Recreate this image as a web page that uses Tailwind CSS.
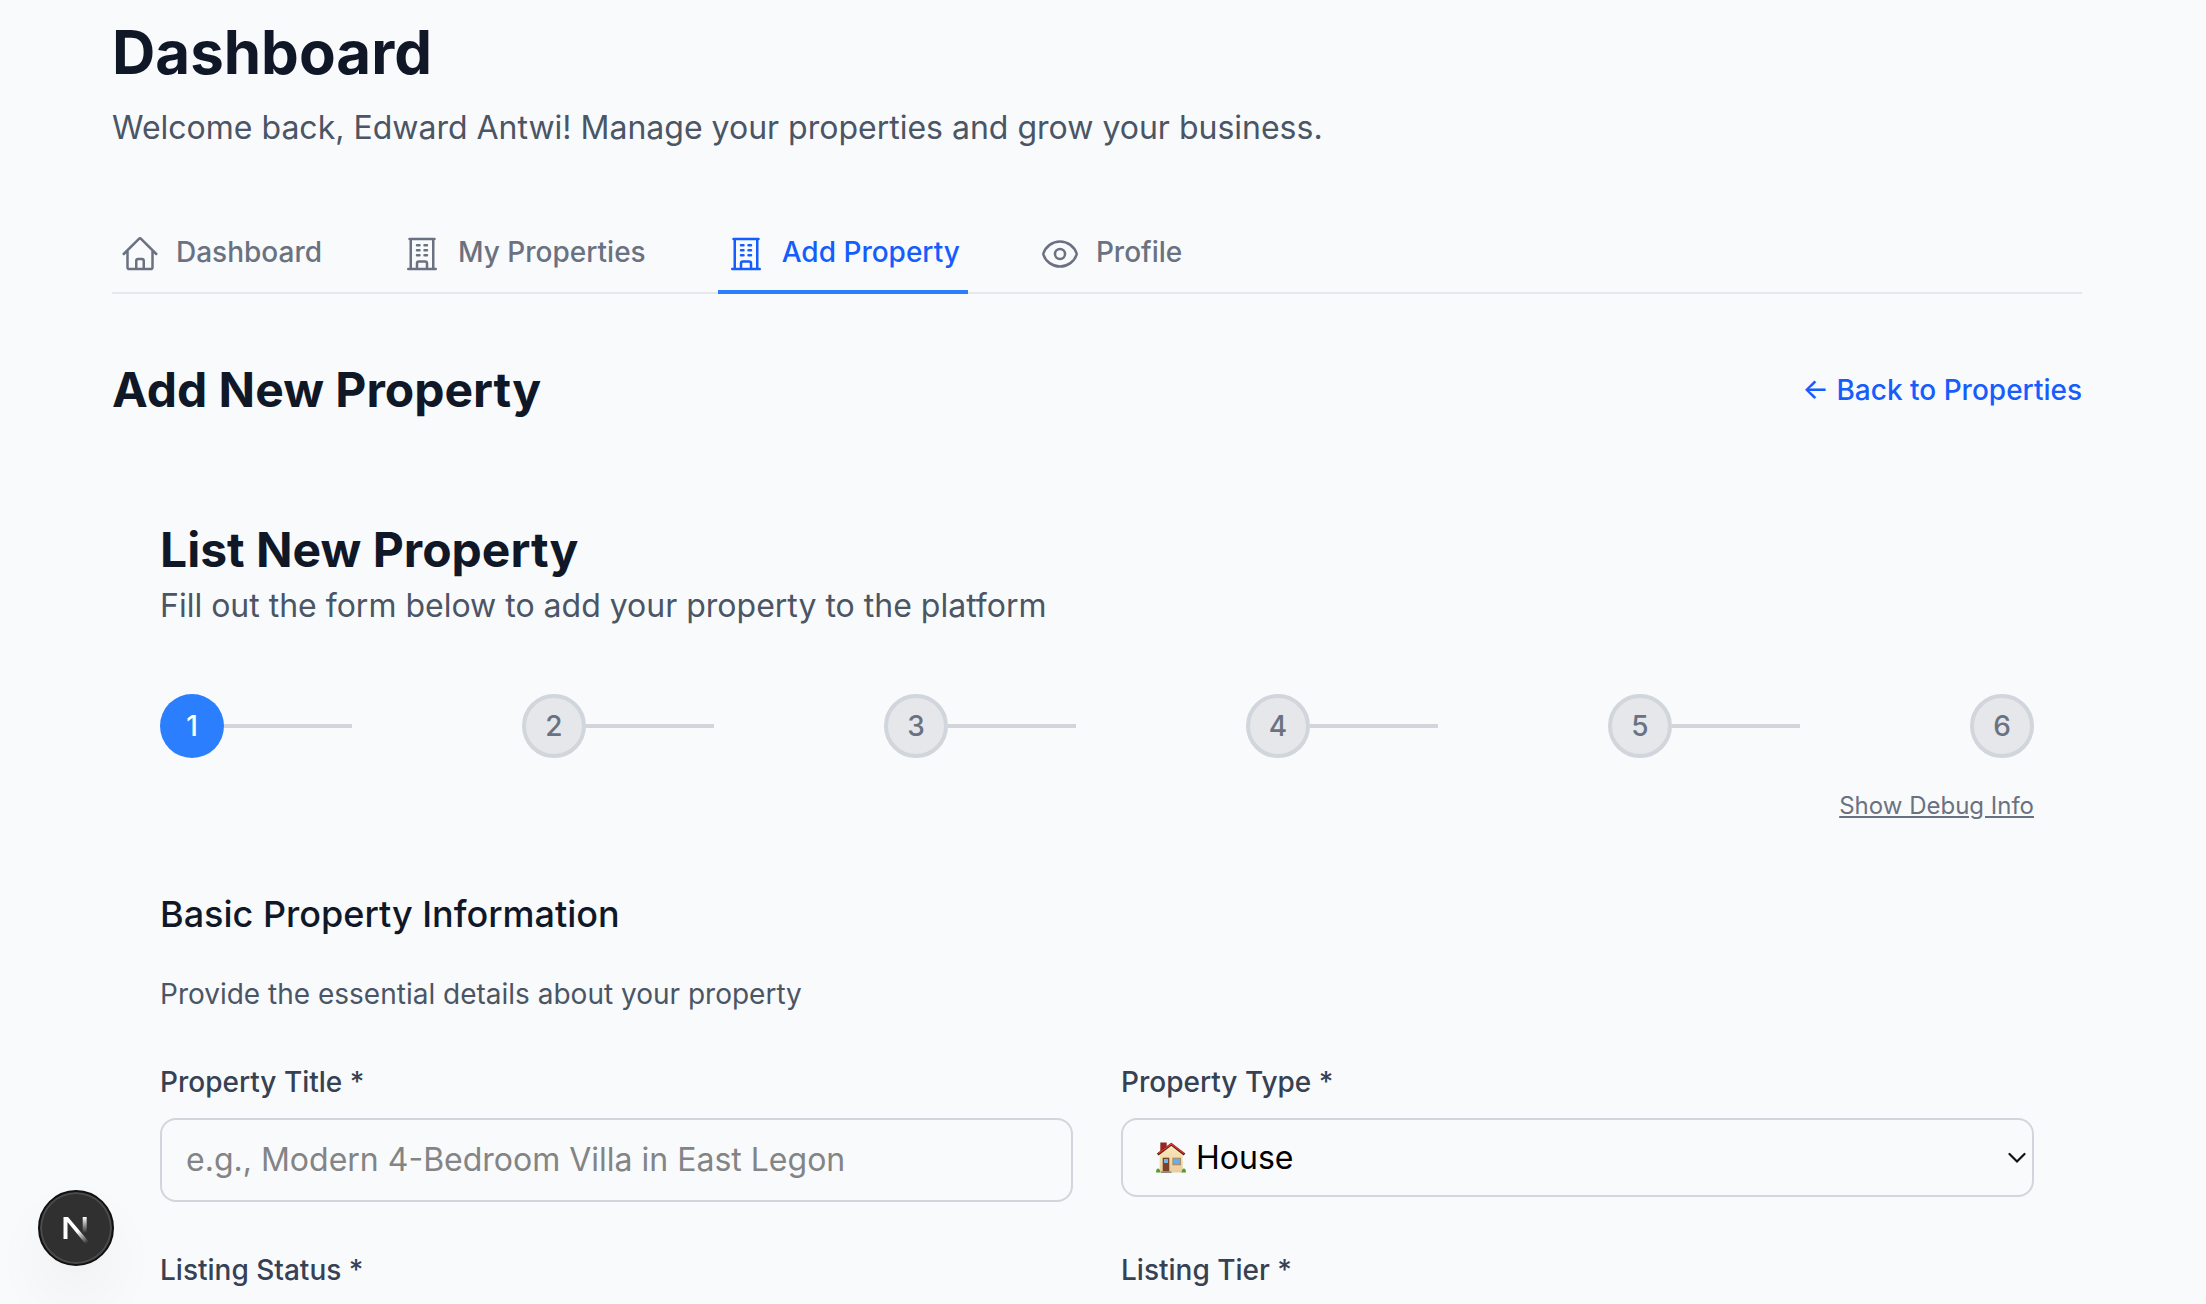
<!DOCTYPE html>
<html lang="en">
<head>
<meta charset="utf-8">
<title>Dashboard</title>
<script src="https://cdn.jsdelivr.net/npm/@tailwindcss/browser@4"></script>
</head>
<body class="h-[1304px] overflow-hidden bg-gray-50 font-['Inter',sans-serif] text-gray-900 antialiased">
<main class="flex flex-col pr-[124px] pl-[112px] pt-4">
  <h1 class="text-[60px] leading-[72px] font-bold">Dashboard</h1>
  <p class="mt-4 text-[32px] leading-[48px] text-gray-600">Welcome back, Edward Antwi! Manage your properties and grow your business.</p>

  <nav class="mt-[66px] flex h-[76px] gap-16 border-b-2 border-gray-200 text-[28px] leading-10 font-medium text-gray-500">
    <a class="flex h-[76px] gap-4 border-b-4 border-transparent px-2 pt-4">
      <svg class="size-10" viewBox="0 0 24 24" fill="none" stroke="currentColor" stroke-width="1.5" stroke-linecap="round" stroke-linejoin="round"><path d="m2.25 12 8.954-8.955c.44-.439 1.152-.439 1.591 0L21.75 12M4.5 9.75v10.125c0 .621.504 1.125 1.125 1.125H9.75v-4.875c0-.621.504-1.125 1.125-1.125h2.25c.621 0 1.125.504 1.125 1.125V21h4.125c.621 0 1.125-.504 1.125-1.125V9.75M8.25 21h8.25"/></svg>
      <span class="-mt-0.5">Dashboard</span>
    </a>
    <a class="flex h-[76px] gap-4 border-b-4 border-transparent px-2 pt-4">
      <svg class="size-10" viewBox="0 0 24 24" fill="none" stroke="currentColor" stroke-width="1.5" stroke-linecap="round" stroke-linejoin="round"><path d="M3.75 21h16.5M4.5 3h15M5.25 3v18m13.5-18v18M9 6.75h1.5m-1.5 3h1.5m-1.5 3h1.5m3-6H15m-1.5 3H15m-1.5 3H15M9 21v-3.375c0-.621.504-1.125 1.125-1.125h3.75c.621 0 1.125.504 1.125 1.125V21"/></svg>
      <span class="-mt-0.5">My Properties</span>
    </a>
    <a class="flex h-[76px] gap-4 border-b-4 border-blue-500 px-2 pt-4 text-blue-600">
      <svg class="size-10" viewBox="0 0 24 24" fill="none" stroke="currentColor" stroke-width="1.5" stroke-linecap="round" stroke-linejoin="round"><path d="M3.75 21h16.5M4.5 3h15M5.25 3v18m13.5-18v18M9 6.75h1.5m-1.5 3h1.5m-1.5 3h1.5m3-6H15m-1.5 3H15m-1.5 3H15M9 21v-3.375c0-.621.504-1.125 1.125-1.125h3.75c.621 0 1.125.504 1.125 1.125V21"/></svg>
      <span class="-mt-0.5">Add Property</span>
    </a>
    <a class="flex h-[76px] gap-4 border-b-4 border-transparent px-2 pt-4">
      <svg class="size-10" viewBox="0 0 24 24" fill="none" stroke="currentColor" stroke-width="1.5" stroke-linecap="round" stroke-linejoin="round"><path d="M2.036 12.322a1.012 1.012 0 0 1 0-.639C3.423 7.51 7.36 4.5 12 4.5c4.638 0 8.573 3.007 9.963 7.178.07.207.07.431 0 .639C20.577 16.49 16.64 19.5 12 19.5c-4.638 0-8.573-3.007-9.963-7.178Z"/><path d="M15 12a3 3 0 1 1-6 0 3 3 0 0 1 6 0Z"/></svg>
      <span class="-mt-0.5">Profile</span>
    </a>
  </nav>

  <div class="mt-16 flex h-16 items-center justify-between">
    <h2 class="text-[48px] leading-[64px] font-bold">Add New Property</h2>
    <a class="text-[28px] leading-10 font-medium text-blue-600">← Back to Properties</a>
  </div>

  <section class="mt-24 flex flex-col px-12">
    <h2 class="text-[48px] leading-[64px] font-bold">List New Property</h2>
    <p class="text-[32px] leading-[48px] text-gray-600">Fill out the form below to add your property to the platform</p>

    <ol class="mt-16 flex justify-between text-[28px] leading-10 font-medium text-gray-500">
      <li class="flex items-center"><span class="flex size-16 items-center justify-center rounded-full bg-blue-500 text-white">1</span><span class="h-1 w-32 bg-gray-300"></span></li>
      <li class="flex items-center"><span class="flex size-16 items-center justify-center rounded-full border-4 border-gray-300 bg-gray-200">2</span><span class="h-1 w-32 bg-gray-300"></span></li>
      <li class="flex items-center"><span class="flex size-16 items-center justify-center rounded-full border-4 border-gray-300 bg-gray-200">3</span><span class="h-1 w-32 bg-gray-300"></span></li>
      <li class="flex items-center"><span class="flex size-16 items-center justify-center rounded-full border-4 border-gray-300 bg-gray-200">4</span><span class="h-1 w-32 bg-gray-300"></span></li>
      <li class="flex items-center"><span class="flex size-16 items-center justify-center rounded-full border-4 border-gray-300 bg-gray-200">5</span><span class="h-1 w-32 bg-gray-300"></span></li>
      <li class="flex items-center"><span class="flex size-16 items-center justify-center rounded-full border-4 border-gray-300 bg-gray-200">6</span></li>
    </ol>
    <button class="mt-8 self-end text-[24px] leading-8 text-gray-500 underline">Show Debug Info</button>

    <h3 class="mt-16 text-[36px] leading-[56px] font-medium">Basic Property Information</h3>
    <p class="mt-8 text-[28px] leading-10 text-gray-600">Provide the essential details about your property</p>

    <div class="mt-12 grid grid-cols-2 gap-x-12 text-[28px] leading-10 font-medium text-gray-700">
      <div class="flex h-[188px] flex-col">
        <label>Property Title *</label>
        <div class="mt-4 flex h-[84px] items-center rounded-2xl border-2 border-gray-300 px-6 text-[32px] font-normal text-[#838485]">e.g., Modern 4-Bedroom Villa in East Legon</div>
      </div>
      <div class="flex h-[188px] flex-col">
        <label>Property Type *</label>
        <div class="mt-4 flex h-[79px] items-center rounded-2xl border-2 border-gray-300 pr-1.5 pl-8 text-[32px] font-normal text-black">
          <svg class="h-8 w-[31px]" viewBox="0 0 31 32">
            <defs><linearGradient id="wall" x2="0" y2="1"><stop stop-color="#fbe9bd"/><stop offset="1" stop-color="#e9cd9c"/></linearGradient></defs>
            <path d="M5.300.5h6.400V9H5.300z" fill="#8f2a22"/>
            <path d="M4.700 11.500 16.300 2.500 27.700 11.500v19h-23z" fill="url(#wall)"/>
            <path d="M2.700 12.500 16.300 2.300 29.500 12.500" fill="none" stroke="#4a1a17" stroke-width="2.500"/>
            <path d="M3.200 11.500 16.300 1.900 29 11.500" fill="none" stroke="#e0352c" stroke-width="1.500"/>
            <path d="M7.700 15.700h6.600V29.500H7.700z" fill="#7b4227"/><path d="M9 17h4v4H9z" fill="#74b5e8"/>
            <path d="M17.300 15.700H26v7.600h-8.700z" fill="#a98f6c"/><path d="M18.500 16.900h6.300v5h-6.300z" fill="#68aee8"/>
            <path d="M6 29.500h10.500V31H6z" fill="#8d8781"/>
            <path d="M1 30.500c0-5.500 4-5.500 4.500 0zM26.500 30.500c.5-5.500 4.500-5.500 4.500 0z" fill="#579a2d"/>
          </svg>
          <span class="ml-2.5 flex-1">House</span>
          <svg class="h-3 w-[18px]" viewBox="0 0 18 12" fill="none" stroke="#111" stroke-width="2.200" stroke-linecap="round"><path d="m1.500 2 7.500 7.500L16.500 2"/></svg>
        </div>
      </div>
      <label>Listing Status *</label>
      <label>Listing Tier *</label>
    </div>
  </section>
</main>

<div class="fixed top-[1190px] left-[38px] flex size-[76px] items-center justify-center rounded-full border-2 border-[#111] bg-[#303030] shadow-[inset_0_0_0_2px_#4b4b4b,0_32px_64px_-8px_rgba(0,0,0,0.07),0_8px_48px_0_rgba(0,0,0,0.02)]">
  <svg class="mt-1 h-[28px] w-[26px]" viewBox="0 0 26 28">
    <defs>
      <linearGradient id="diag" x1="15" y1="15" x2="24" y2="27" gradientUnits="userSpaceOnUse"><stop stop-color="#fff"/><stop offset="1" stop-color="#fff" stop-opacity="0"/></linearGradient>
      <linearGradient id="stem" x2="0" y2="1"><stop stop-color="#fff"/><stop offset="1" stop-color="#fff" stop-opacity="0"/></linearGradient>
    </defs>
    <path d="M.5 1H5l20.700 24.500-3.200 2.500L4.500 6v17h-4z" fill="url(#diag)"/>
    <path d="M19.700 1h4v16h-4z" fill="url(#stem)"/>
  </svg>
</div>
</body>
</html>
